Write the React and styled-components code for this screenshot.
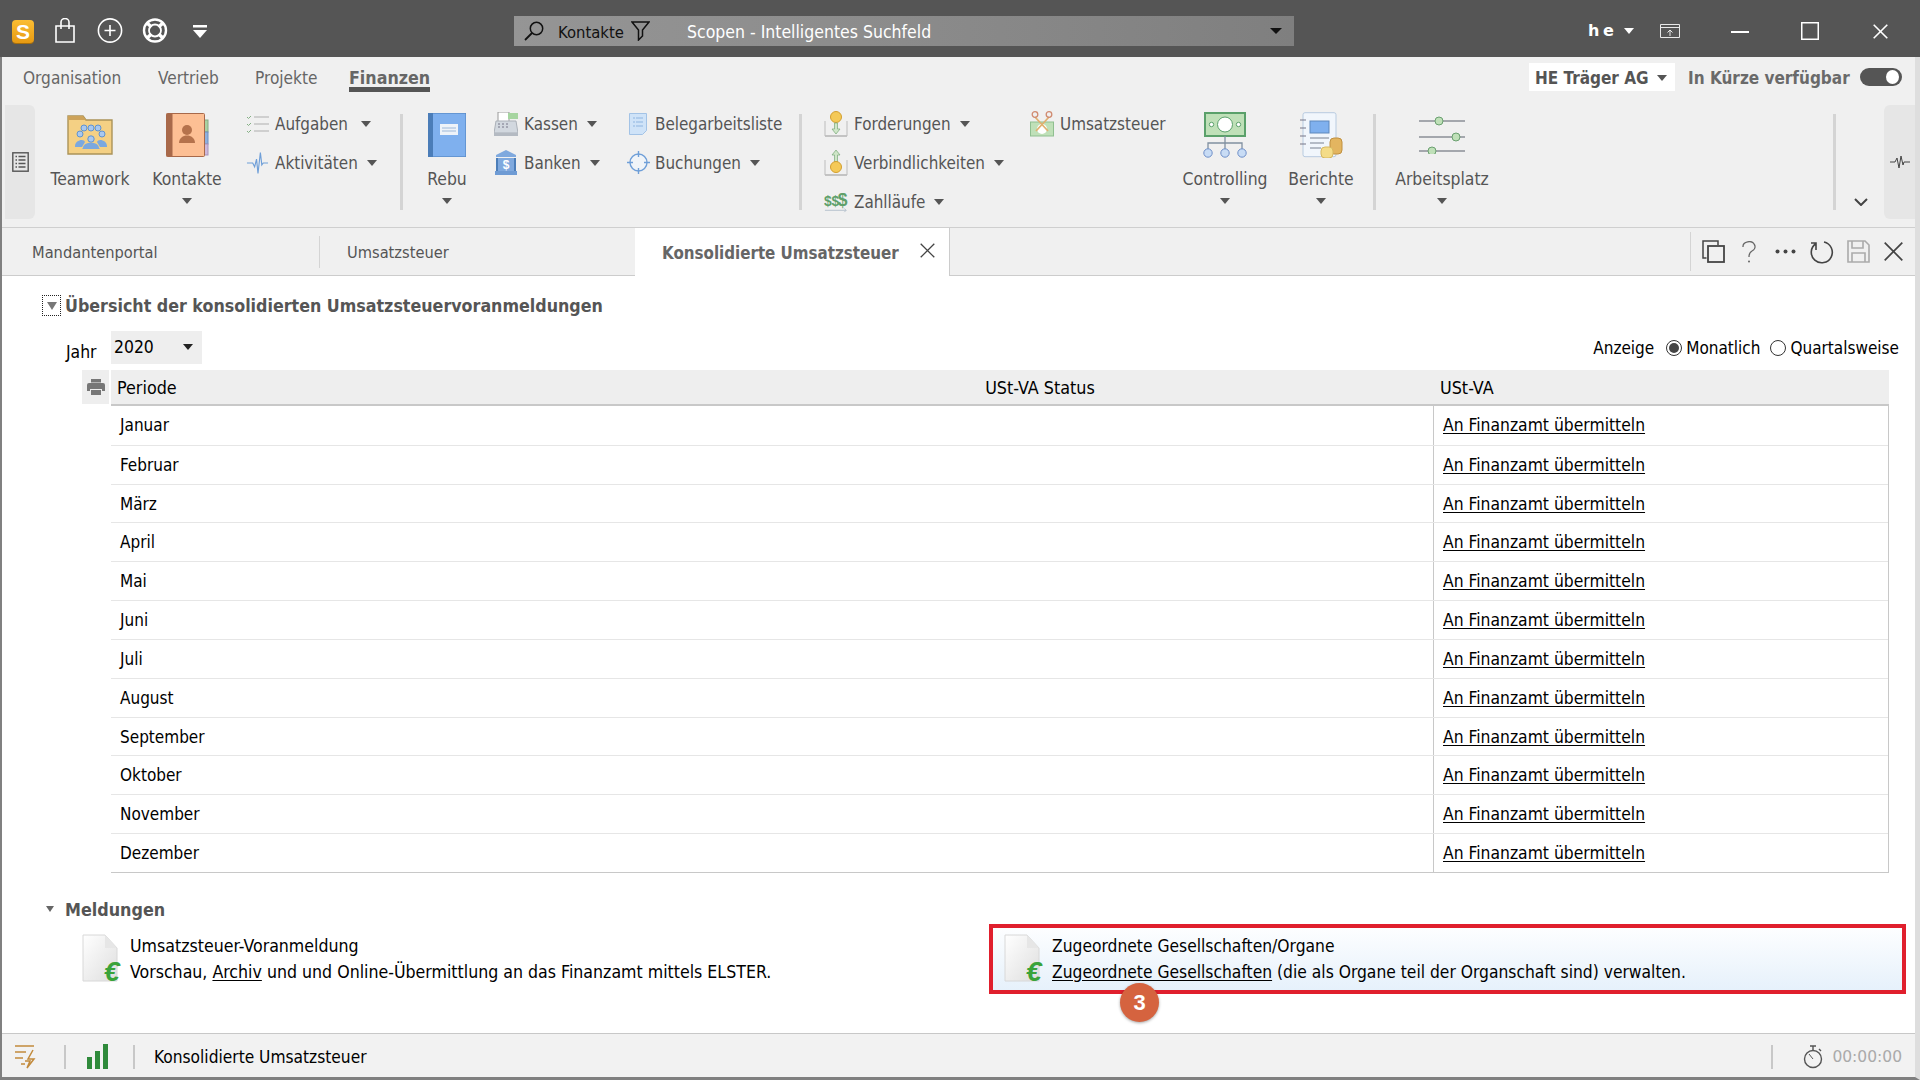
import React from 'react';
import styled, { createGlobalStyle } from 'styled-components';

const Global = createGlobalStyle`
  html, body { margin: 0; padding: 0; background: #fff; }
  body { font-family: "DejaVu Sans Condensed", "DejaVu Sans", sans-serif; font-stretch: condensed; font-size: 17px; color: #000; overflow: hidden; }
  * { box-sizing: border-box; }
`;

const Frame = styled.div`
  width: 1920px; height: 1080px; display: flex; flex-direction: column; background: #fff;
`;
const TitleBar = styled.header`
  height: 57px; flex: none; background: #555; display: flex; align-items: flex-start; position: relative;
`;
const Logo = styled.div`
  width: 22px; height: 23px; margin: 20px 0 0 12px; border-radius: 4px; background: linear-gradient(#fbbd33, #e79a12);
  color: #fff; font: bold 21px/23px "Liberation Sans", sans-serif; text-align: center; box-shadow: 0 1px 0 #a86f0c;
`;
const TitleIcon = styled.div`
  margin: ${p => p.$top}px 0 0 ${p => p.$ml}px; width: ${p => p.$w}px; height: ${p => p.$h}px; display: flex;
`;
const SearchBox = styled.div`
  margin: 16px 0 0 307px; width: 780px; height: 30px; background: linear-gradient(90deg, #959595 0, #8b8b8b 50%, #7f7f7f 100%);
  display: flex; align-items: center; position: relative;
`;
const SearchScope = styled.span`
  margin: 2px 0 0 14px; color: #111; font-size: 16.5px; width: 73px; white-space: nowrap;
`;
const SearchHint = styled.span`
  margin: 2px 0 0 37px; color: #fff; font-size: 17.5px; white-space: nowrap;
`;
const SearchCaret = styled.span`
  position: absolute; right: 12px; top: 12px; width: 0; height: 0; border: 6px solid transparent; border-top: 6px solid #111; border-bottom: 0;
`;
const UserName = styled.span`
  margin: 21px 0 0 294px; width: 36px; color: #fff; font: bold 16px/20px "DejaVu Sans", sans-serif; letter-spacing: 3.5px; white-space: nowrap;
`;
const Caret = styled.span`
  display: inline-block; width: 0; height: 0; flex: none; border-left: ${p => p.$s || 5}px solid transparent; border-right: ${p => p.$s || 5}px solid transparent;
  border-top: ${p => (p.$s || 5) + 1}px solid ${p => p.$c || '#555'};
`;
const UserCaret = styled(Caret)`margin: 28px 0 0 0;`;

const Body = styled.div`
  flex: 1; display: flex; flex-direction: column; min-height: 0; border-left: 2px solid #808080; border-right: 5px solid #dedede; border-bottom: 3px solid #808080;
`;
const Ribbon = styled.section`
  height: 171px; flex: none; background: #f0f0f0; display: flex; flex-direction: column; border-bottom: 1px solid #cfcfcf;
`;
const RibbonTabs = styled.nav`
  height: 43px; flex: none; display: flex; align-items: flex-start; padding-left: 21px; position: relative;
`;
const RibbonTab = styled.a`
  height: 35px; padding-top: 11px; line-height: 20px; font-size: ${p => p.$on ? 17.7 : 17.1}px; color: #666; font-weight: ${p => p.$on ? 700 : 400};
  border-bottom: ${p => p.$on ? '5px solid #555' : '0'}; white-space: nowrap; width: ${p => p.$w ? `${p.$w}px` : 'auto'};
`;
const Company = styled.div`
  position: absolute; left: 1527px; top: 6px; width: 146px; height: 28px; background: #fff; display: flex; align-items: center; justify-content: space-between;
  padding: 1px 8px 0 6px; font: bold 17px/20px "DejaVu Sans Condensed", sans-serif; color: #555; white-space: nowrap;
`;
const Soon = styled.div`
  position: absolute; left: 1686px; top: 10px; font-weight: 700; font-size: 17px; line-height: 22px; color: #6a6a6a; white-space: nowrap;
`;
const Toggle = styled.div`
  position: absolute; left: 1858px; top: 11px; width: 42px; height: 18px; border-radius: 9px; background: #555;
  &::after { content: ''; position: absolute; right: 3px; top: 2px; width: 13px; height: 14px; border-radius: 50%; background: #fff; }
`;
const RibbonBody = styled.div`
  flex: 1; display: flex; align-items: flex-start;
`;
const SidePill = styled.div`
  width: ${p => p.$w}px; margin: 5px 0 0 ${p => p.$ml}px; height: 114px; background: #e6e6e6; display: flex; align-items: center; justify-content: center;
  border-radius: ${p => p.$right ? '6px 0 0 6px' : '0 6px 6px 0'};
`;
const Big = styled.div`
  width: ${p => p.$w}px; margin-left: ${p => p.$ml}px; padding-top: 12px; display: flex; flex-direction: column; align-items: center; flex: none;
`;
const BigIcon = styled.div`height: 46px; display: flex; align-items: center; justify-content: center;`;
const BigLabel = styled.div`
  margin-top: 11px; height: 20px; line-height: 20px; font-size: 17.4px; color: #555; white-space: nowrap;
`;
const BigCaret = styled(Caret)`margin-top: 9px;`;
const SmallCol = styled.div`
  width: ${p => p.$w}px; margin-left: ${p => p.$ml}px; padding-top: 4px; display: flex; flex-direction: column; flex: none;
`;
const SmallRow = styled.div`
  height: 39px; display: flex; align-items: center; font-size: 16.9px; color: #555; white-space: nowrap; position: relative;
`;
const SmallIcon = styled.div`
  width: ${p => p.$w || 24}px; margin-right: ${p => p.$gap || 6}px; display: flex; justify-content: center; align-items: center; flex: none;
`;
const SmallCaret = styled(Caret)`margin-left: ${p => p.$ml || 9}px;`;
const RibbonSep = styled.div`
  width: 3px; height: 96px; margin: 14px 0 0 ${p => p.$ml}px; background: #d4d4d4; flex: none;
`;
const Chevron = styled.div`
  width: 14px; margin: 98px 0 0 ${p => p.$ml}px; flex: none; display: flex;
`;

const TabStrip = styled.div`
  height: 48px; flex: none; background: #f0f0f0; display: flex; align-items: stretch; border-bottom: 1px solid #ccc; position: relative;
`;
const DocTab = styled.div`
  width: ${p => p.$w}px; padding: 2px 0 0 ${p => p.$pl}px; display: flex; align-items: center; color: #555; font-size: 16.3px; white-space: nowrap; position: relative;
  &::after { content: ''; display: ${p => p.$line ? 'block' : 'none'}; position: absolute; right: 0; top: 8px; bottom: 7px; width: 1px; background: #d4d4d4; }
`;
const ActiveTab = styled.div`
  width: 315px; height: 48px; padding: 2px 0 0 27px; background: #fff; margin-left: -1px; display: flex; align-items: center; color: #666; font-weight: 700; font-size: 16.8px; white-space: nowrap; position: relative;
  border-right: 1px solid #ccc;
`;
const TabClose = styled.div`margin: -5px 0 0 21px; display: flex;`;
const TabTools = styled.div`
  margin-left: auto; width: 225px; border-left: 1px solid #d4d4d4; margin-top: 8px; display: flex; align-items: center; padding-left: 11px; position: relative; top: -4px;
`;
const ToolIcon = styled.div`
  margin-left: ${p => p.$ml || 0}px; display: flex;
`;

const Content = styled.main`
  flex: 1; min-height: 0; display: flex; flex-direction: column; background: #fff; padding-top: 19px; position: relative;
`;
const SectionHead = styled.div`
  display: flex; align-items: center; height: 21px; margin-left: 40px; gap: 4px; font-weight: 700; font-size: 17.7px; color: #555; white-space: nowrap;
`;
const HeadText = styled.span`margin-top: 1px;`;
const ExpandBox = styled.div`
  width: 19px; height: 21px; border: 1px dotted #222; display: flex; align-items: center; justify-content: center;
`;
const FilterRow = styled.div`
  height: 33px; margin-top: 15px; display: flex; align-items: flex-start; padding-left: 64px;
`;
const JahrLabel = styled.span`width: 45px; margin-top: 11px; line-height: 20px; font-size: 17.4px;`;
const YearSelect = styled.div`
  width: 91px; height: 33px; background: #eee; display: flex; align-items: center; justify-content: space-between; padding: 0 9px 1px 3px; font-size: 17.4px;
`;
const Anzeige = styled.div`
  margin-left: auto; margin-right: 16px; height: 33px; display: flex; align-items: center; font-size: 17px; white-space: nowrap;
`;
const Radio = styled.span`
  width: 16px; height: 16px; border-radius: 50%; border: 1px solid #333; margin: 0 4px 0 ${p => p.$ml}px; display: flex; align-items: center; justify-content: center; background: #fff;
  &::after { content: ''; width: 10px; height: 10px; border-radius: 50%; background: ${p => p.$on ? '#444' : 'transparent'}; }
`;
const TableWrap = styled.div`
  margin: 6px 0 0 80px; display: flex; align-items: flex-start; gap: 2px;
`;
const PrintCell = styled.div`
  width: 27px; height: 34px; background: #eee; display: flex; align-items: center; justify-content: center;
`;
const Grid = styled.div`width: 1778px;`;
const HeadRow = styled.div`
  height: 36px; display: grid; grid-template-columns: 536px 786px 1fr; background: #eee; border-bottom: 2px solid #c8c8c8; align-items: center; font-size: 17.8px; padding-top: 1px;
`;
const HeadCell = styled.div`
  padding-left: ${p => p.$pl || 0}px; text-align: ${p => p.$center ? 'center' : 'left'};
`;
const Rows = styled.div`
  height: 467px; display: grid; grid-auto-rows: 1fr; border-right: 1px solid #c8c8c8; border-bottom: 1px solid #c8c8c8;
`;
const Row = styled.div`
  display: grid; grid-template-columns: 1322px 1fr; border-top: ${p => p.$first ? 0 : '1px solid #e6e6e6'}; font-size: 17.35px; align-items: stretch;
`;
const PeriodCell = styled.div`display: flex; align-items: center; padding-left: 9px; font-size: 17px;`;
const LinkCell = styled.div`display: flex; align-items: center; padding-left: 9px; border-left: 1px solid #c8c8c8;`;
const Link = styled.a`
  color: #000; text-decoration: underline; text-underline-offset: 2px; white-space: nowrap;
`;
const MeldHead = styled.div`
  margin: 25px 0 0 44px; height: 22px; display: flex; align-items: center; gap: 11px; font-weight: 700; font-size: 17.8px; color: #555;
`;
const Cards = styled.div`
  margin-top: 4px; display: flex; align-items: flex-start;
`;
const Card = styled.div`
  width: ${p => p.$w}px; height: 70px; margin-left: ${p => p.$ml}px; padding: ${p => p.$hi ? '8px 0 0 11px' : '12px 0 0 0'}; display: flex; position: relative;
  font-size: ${p => p.$hi ? 17.3 : 17.6}px;
  ${p => p.$hi && 'border: 4px solid #e01f2d; background: linear-gradient(#fdfeff, #e6f1fb);'}
`;
const CardIcon = styled.div`width: 48px; height: 50px; flex: none; display: flex; margin-top: -2px;`;
const CardText = styled.div`display: flex; flex-direction: column; gap: 6px; white-space: nowrap; line-height: 20px;`;
const Badge = styled.div`
  position: absolute; left: 127px; bottom: -32px; width: 39px; height: 39px; border-radius: 50%; background: #d5633f; color: #fff;
  font: bold 22px/39px "Liberation Sans", sans-serif; text-align: center; box-shadow: 0 1px 3px rgba(0,0,0,.35);
`;
const StatusBar = styled.footer`
  height: 44px; flex: none; background: #f2f2f2; border-top: 1px solid #c8c8c8; padding-top: 2px; display: flex; align-items: center; position: relative; font-size: 17.2px;
`;
const StatusSep = styled.div`
  width: 2px; height: 24px; background: #c8c8c8; margin-left: ${p => p.$ml}px; flex: none;
`;
const StatusIcon = styled.div`margin-left: ${p => p.$ml}px; display: flex; flex: none;`;
const StatusText = styled.span`margin-left: 19px; white-space: nowrap; flex: 1;`;
const Timer = styled.span`margin: 0 13px 0 9px; color: #aaa; font: 15.5px "DejaVu Sans", sans-serif; white-space: nowrap;`;

/* Icons */
const Svg = ({ w, h, children, vb }) => <svg width={w} height={h} viewBox={vb || `0 0 ${w} ${h}`} fill="none">{children}</svg>;

const Bag = () => <Svg w={22} h={25}><path d="M2 8h18v16H2zM7 11V4a4 3.5 0 0 1 8 0v7" stroke="#fff" strokeWidth="1.6"/></Svg>;
const PlusCircle = () => <Svg w={26} h={25}><circle cx="13" cy="12.5" r="11.6" stroke="#fff" strokeWidth="1.6"/><path d="M13 7v11M7.5 12.5h11" stroke="#fff" strokeWidth="1.6"/></Svg>;
const Buoy = () => <Svg w={26} h={25}><circle cx="13" cy="12.5" r="11" stroke="#fff" strokeWidth="2.4"/><circle cx="13" cy="12.5" r="6" stroke="#fff" strokeWidth="1.8"/><path d="M5 5l4.5 4M21 5l-4.5 4M5 20l4.5-4M21 20l-4.5-4" stroke="#fff" strokeWidth="3.4"/></Svg>;
const QuickDrop = () => <Svg w={14} h={13}><path d="M0 0h14v2.5H0zM0 5h14l-7 8z" fill="#fff"/></Svg>;
const Magnifier = () => <Svg w={20} h={20}><circle cx="12.5" cy="7.5" r="6.2" stroke="#111" strokeWidth="1.5"/><path d="M8 12l-7 7" stroke="#111" strokeWidth="1.8"/></Svg>;
const FilterIcon = () => <Svg w={19} h={20}><path d="M1 1h17l-6.5 8v6l-4 4V9z" stroke="#111" strokeWidth="1.5"/></Svg>;
const ScreenIcon = () => <Svg w={20} h={14}><path d="M.5.5h19v13H.5zM.5 3.5h19" stroke="#e8e8e8"/><path d="M10 12V6M7.5 8.5L10 6l2.5 2.5" stroke="#e8e8e8"/></Svg>;
const MinIcon = () => <Svg w={18} h={3}><rect width="18" height="2" fill="#fff"/></Svg>;
const MaxIcon = () => <Svg w={18} h={18}><rect x=".75" y=".75" width="16.5" height="16.5" stroke="#fff" strokeWidth="1.5"/></Svg>;
const XIcon = ({ s = 15, c = '#fff', sw = 1.6 }) => <Svg w={s} h={s}><path d={`M.7.7L${s - .7} ${s - .7}M${s - .7} .7L.7 ${s - .7}`} stroke={c} strokeWidth={sw}/></Svg>;

const ListDoc = () => <Svg w={17} h={20}><rect x=".8" y=".8" width="15.4" height="18.4" stroke="#555" strokeWidth="1.4"/><path d="M3.5 4.5h1.5M6.5 4.5h7M3.5 8h1.5M6.5 8h7M3.5 11.5h1.5M6.5 11.5h7M3.5 15h1.5M6.5 15h7" stroke="#555" strokeWidth="1.4"/></Svg>;
const PulseSmall = () => <Svg w={20} h={14}><path d="M0 7h5l2-4 2 10 2-12 2 9 1-3h6" stroke="#444" strokeWidth="1"/></Svg>;
const ChevronDown = () => <Svg w={14} h={8}><path d="M1 1l6 6 6-6" stroke="#444" strokeWidth="2"/></Svg>;

const FolderIcon = () => <Svg w={46} h={40}><path d="M1 3.5V39h44V5H19l-3-4H1z" fill="#f4d084" stroke="#ab9358" strokeWidth="1.4"/><path d="M1 1h15l3 4H1z" fill="#cda35a"/>
  {[[17, 13], [24, 13], [31, 13]].map(([x, y]) => <circle key={x} cx={x} cy={y} r="3" fill="#a9c8ee" stroke="#5f93d0"/>)}
  {[[13, 19], [35, 19]].map(([x, y]) => <circle key={x} cx={x} cy={y} r="3" fill="#a9c8ee" stroke="#5f93d0"/>)}
  <circle cx="24" cy="24" r="3.2" fill="#a9c8ee" stroke="#5f93d0"/>
  <path d="M16 33c0-7 16-7 16 0l1 1H15zM8 31c0-6 9-8 10-4l-3 5H8zM40 31c0-6-9-8-10-4l3 5h7z" fill="#7ba8df"/></Svg>;
const AddressBook = () => <Svg w={43} h={44}><rect x="37" y="7" width="5" height="12" fill="#a9d2a2" stroke="#86aa84"/><rect x="37" y="19" width="5" height="12" fill="#8fb1de" stroke="#6f8fc0"/><rect x="37" y="31" width="5" height="11" fill="#ccb8dc" stroke="#a893b8"/><rect x=".5" y=".5" width="38" height="43" rx="1" fill="#fdbf94" stroke="#a8694a"/><rect x=".5" y=".5" width="6" height="43" fill="#a8694a"/><circle cx="21" cy="17" r="5" fill="#b5724c"/><path d="M13 30c0-10 16-10 16 0z" fill="#b5724c"/></Svg>;
const CheckList = () => <Svg w={23} h={18}><path d="M8 2h15M8 9h15M8 16h15" stroke="#c4c4c4" strokeWidth="1.5"/><path d="M1 2l1.5 1.5L5 1M1 9l1.5 1.5L5 8M1 16l1.5 1.5L5 15" stroke="#84b084" strokeWidth="1"/></Svg>;
const Pulse = () => <Svg w={24} h={26}><path d="M1 13h6l2 4 2-8 1.5 15L15 2l1.5 13 1.5-2h5" stroke="#6f9fd8" strokeWidth="1.2"/></Svg>;
const BlueBook = () => <Svg w={38} h={44}><rect width="38" height="44" fill="#7fb0ee" stroke="#4b7db8" rx="1"/><rect width="5" height="44" fill="#4b7db8"/><rect x="12" y="11" width="18" height="11" fill="#eef3f9"/><path d="M14 15h14M14 18h14" stroke="#9db8d8"/></Svg>;
const Register = () => <Svg w={24} h={24}><rect x="4" y="0" width="11" height="10" fill="#fff" stroke="#999"/><rect x="14" y="1" width="10" height="6" fill="#a6d5a0"/><path d="M2 9h20l2 12H0z" fill="#d2d8df" stroke="#aab0b8"/><path d="M4 12h2M8 12h2M12 12h2M4 15h2M8 15h2M12 15h2" stroke="#778"/><rect y="21" width="24" height="3" fill="#b4bac2"/></Svg>;
const Bank = () => <Svg w={22} h={25}><path d="M11 0L1 5v2h20V5z" fill="#7fa9de"/><rect x="3" y="8" width="16" height="13" fill="#7fa9de"/><rect x="1" y="8" width="2" height="13" fill="#4b7db8"/><rect x="19" y="8" width="2" height="13" fill="#4b7db8"/><rect y="21" width="22" height="4" fill="#6e9bd4"/><text x="11" y="19" textAnchor="middle" fontFamily="Liberation Sans" fontWeight="700" fontSize="12" fill="#fff">$</text></Svg>;
const LightDoc = () => <Svg w={18} h={22}><path d="M.5.5h17v17l-4 4H.5z" fill="#cfe3f8" stroke="#a3c3e6"/><path d="M4 5h2M7 5h7M4 9h2M7 9h7M4 13h2M7 13h7" stroke="#8fb5e0"/></Svg>;
const Target = () => <Svg w={23} h={23}><circle cx="11.5" cy="11.5" r="8.5" fill="#f0f4f8" stroke="#6f9fd8" strokeWidth="1.4"/><path d="M11.5 0v6M11.5 17v6M0 11.5h6M17 11.5h6" stroke="#6f9fd8" strokeWidth="1.4"/></Svg>;
const CoinTray = ({ up }) => <Svg w={24} h={26}><path d="M1 10v15h22V10" stroke="#bcbcbc" strokeWidth="1"/><path d="M1 25h22" stroke="#bcbcbc" strokeWidth="1.5"/>{up ? <><path d="M12 0l-4 5h2.5v7h3V5H16z" fill="#cfe6c8" stroke="#77a877" strokeWidth=".7"/><circle cx="12" cy="17" r="5.5" fill="#f4c957" stroke="#d39f2f"/></> : <><circle cx="12" cy="6" r="5.5" fill="#f4c957" stroke="#d39f2f"/><path d="M12 23l4-5h-2.5v-6h-3v6H8z" fill="#cfe6c8" stroke="#77a877" strokeWidth=".7"/></>}</Svg>;
const Dollars = () => <Svg w={26} h={26}><text x="0" y="17" fontFamily="Liberation Sans" fontWeight="700" fontSize="15" fill="#5fa06a">$</text><text x="8" y="17" fontFamily="Liberation Sans" fontWeight="700" fontSize="15" fill="#5fa06a">$</text><text x="15" y="17" fontFamily="Liberation Sans" fontWeight="700" fontSize="19" fill="#5fa06a">$</text><path d="M1 22h23l-2-2M24 22l-2 2" stroke="#b4c0cc"/></Svg>;
const Scissors = () => <Svg w={24} h={26}><rect x=".5" y="11" width="23" height="14" fill="#bfe0b8" stroke="#8fbf90"/><circle cx="12" cy="18" r="5" fill="#fff"/><path d="M5 6l13 14M19 6L6 20" stroke="#e0b070" strokeWidth="1.8"/><circle cx="5" cy="3.5" r="2.8" stroke="#d08a70" strokeWidth="1.3"/><circle cx="19" cy="3.5" r="2.8" stroke="#d08a70" strokeWidth="1.3"/></Svg>;
const ControllingIcon = () => <Svg w={44} h={46}><rect x="2" y="1" width="40" height="23" fill="#bfe0b8" stroke="#5aa06a" strokeWidth="2"/><circle cx="22" cy="12.5" r="7.5" fill="#fff" stroke="#5aa06a"/><circle cx="8.5" cy="12.5" r="2.2" fill="#fff" stroke="#5aa06a"/><circle cx="35.5" cy="12.5" r="2.2" fill="#fff" stroke="#5aa06a"/><path d="M22 24v13M5 37v-6h34v6" stroke="#8090a0" strokeWidth="1.3"/><circle cx="5" cy="41" r="4.2" fill="#c8dcf5" stroke="#6f8fc8"/><circle cx="22" cy="41" r="4.2" fill="#c8dcf5" stroke="#6f8fc8"/><circle cx="39" cy="41" r="4.2" fill="#c8dcf5" stroke="#6f8fc8"/></Svg>;
const ReportIcon = () => <Svg w={43} h={46}><rect x="3" y=".7" width="33" height="44" rx="2" fill="#f1f6fc" stroke="#b8cbe0"/><path d="M0 8h6M0 16h6M0 24h6M0 32h6" stroke="#778" strokeWidth="1.2"/><rect x="10" y="9" width="19" height="12" fill="#7fb0ee" stroke="#5f88bc"/><path d="M10 26h19M10 31h14M10 36h11" stroke="#a0a8b4" strokeWidth="1.3"/><rect x="30" y="26" width="12" height="16" rx="4" fill="#e3b560" stroke="#c09040"/><rect x="21" y="35" width="12" height="11" rx="4" fill="#f4dc88" stroke="#d6b860"/></Svg>;
const Sliders = () => <Svg w={46} h={38}><path d="M0 5h46M0 21h46M0 35h46" stroke="#8a8f96" strokeWidth="1.5"/><circle cx="20" cy="5" r="4" fill="#bfe0b8" stroke="#6aa070"/><circle cx="37" cy="21" r="4" fill="#bfe0b8" stroke="#6aa070"/><circle cx="13" cy="35" r="4" fill="#bfe0b8" stroke="#6aa070"/></Svg>;
const CopyIcon = () => <Svg w={23} h={23}><path d="M4.5 18H1V1h15v4" stroke="#444" strokeWidth="1.5"/><rect x="6" y="6" width="16" height="16" stroke="#444" strokeWidth="1.8"/></Svg>;
const QIcon = () => <Svg w={14} h={22}><path d="M1 6a6 5 0 1 1 9 4c-2 1-3 3-3 6" stroke="#666" strokeWidth="1.3"/><circle cx="7" cy="20.5" r="1" fill="#666"/></Svg>;
const Dots = () => <Svg w={21} h={5}><circle cx="2.5" cy="2.5" r="2" fill="#444"/><circle cx="10.5" cy="2.5" r="2" fill="#444"/><circle cx="18.5" cy="2.5" r="2" fill="#444"/></Svg>;
const Refresh = () => <Svg w={24} h={24}><path d="M6 3.5a10.5 10.5 0 1 0 8-1.5M6 10V3H1" stroke="#444" strokeWidth="1.6"/></Svg>;
const SaveIcon = () => <Svg w={23} h={23}><path d="M1 1h17l4 4v17H1zM5 1v7h11V1M5 22v-9h13v9" stroke="#aaa" strokeWidth="1.6"/></Svg>;
const Printer = () => <Svg w={18} h={18}><rect x="4" y="1" width="10" height="3.5" fill="#777"/><path d="M2 5h14a2 2 0 0 1 2 2v6h-3v-2H3v2H0V7a2 2 0 0 1 2-2z" fill="#777"/><rect x="4" y="12" width="10" height="5" fill="#777"/></Svg>;
const TriDown = ({ s = 10, c = '#777' }) => <Svg w={s} h={s - 2}><path d={`M0 0h${s}L${s / 2} ${s - 2}z`} fill={c}/></Svg>;
const DocEuro = ({ id }) => <Svg w={44} h={54}><defs><linearGradient id={id} x1="0" y1="0" x2="1" y2="1"><stop offset="0" stopColor="#fff"/><stop offset="1" stopColor="#dedede"/></linearGradient></defs><path d="M1 1h22l12 13v33H1z" fill={`url(#${id})`} stroke="#d8d8d8"/><path d="M23 1v13h12z" fill="#e6e6e6"/><text x="22" y="47" fontFamily="Liberation Sans" fontStyle="italic" fontWeight="700" fontSize="28" fill="#3aa33a">€</text></Svg>;
const Bolt = () => <Svg w={25} h={24}><path d="M0 1h19M0 7h11M0 13h8M6 19h4" stroke="#c28a3c" strokeWidth="1.5"/><path d="M18 5l-5 9h6l-7 9 3-7h-5" stroke="#c28a3c" strokeWidth="1.5"/></Svg>;
const Bars = () => <Svg w={22} h={25}><rect x="0" y="13" width="5" height="12" fill="#2f8a3b"/><rect x="8" y="7" width="5" height="18" fill="#2f8a3b"/><rect x="16" y="0" width="5" height="25" fill="#2f8a3b"/></Svg>;
const Watch = () => <Svg w={20} h={24}><path d="M7 1h6M10 1v4M16 4l2 2" stroke="#555" strokeWidth="1.4"/><circle cx="10" cy="14" r="8.5" stroke="#555" strokeWidth="1.4"/><path d="M10 14L6 9" stroke="#555"/></Svg>;

const months = ['Januar', 'Februar', 'März', 'April', 'Mai', 'Juni', 'Juli', 'August', 'September', 'Oktober', 'November', 'Dezember'];

export default function App() {
  return (
    <Frame>
      <Global />
      <TitleBar>
        <Logo>S</Logo>
        <TitleIcon $top={18} $ml={20} $w={22} $h={25}><Bag /></TitleIcon>
        <TitleIcon $top={18} $ml={21} $w={26} $h={25}><PlusCircle /></TitleIcon>
        <TitleIcon $top={18} $ml={19} $w={26} $h={25}><Buoy /></TitleIcon>
        <TitleIcon $top={25} $ml={25} $w={14} $h={13}><QuickDrop /></TitleIcon>
        <SearchBox>
          <TitleIcon $top={0} $ml={10} $w={20} $h={20}><Magnifier /></TitleIcon>
          <SearchScope>Kontakte</SearchScope>
          <FilterIcon />
          <SearchHint>Scopen - Intelligentes Suchfeld</SearchHint>
          <SearchCaret />
        </SearchBox>
        <UserName>he</UserName>
        <UserCaret $c="#fff" />
        <TitleIcon $top={24} $ml={26} $w={20} $h={14}><ScreenIcon /></TitleIcon>
        <TitleIcon $top={31} $ml={51} $w={18} $h={3}><MinIcon /></TitleIcon>
        <TitleIcon $top={22} $ml={52} $w={18} $h={18}><MaxIcon /></TitleIcon>
        <TitleIcon $top={24} $ml={54} $w={15} $h={15}><XIcon /></TitleIcon>
      </TitleBar>
      <Body>
        <Ribbon>
          <RibbonTabs>
            <RibbonTab $w={135}>Organisation</RibbonTab>
            <RibbonTab $w={97}>Vertrieb</RibbonTab>
            <RibbonTab $w={94}>Projekte</RibbonTab>
            <RibbonTab $on>Finanzen</RibbonTab>
            <Company>HE Träger AG <Caret $c="#555" /></Company>
            <Soon>In Kürze verfügbar</Soon>
            <Toggle />
          </RibbonTabs>
          <RibbonBody>
            <SidePill $w={30} $ml={3}><ListDoc /></SidePill>
            <Big $w={90} $ml={10}><BigIcon><FolderIcon /></BigIcon><BigLabel>Teamwork</BigLabel></Big>
            <Big $w={84} $ml={10}><BigIcon><AddressBook /></BigIcon><BigLabel>Kontakte</BigLabel><BigCaret /></Big>
            <SmallCol $w={146} $ml={17}>
              <SmallRow><SmallIcon $w={23}><CheckList /></SmallIcon>Aufgaben<SmallCaret $ml={13} /></SmallRow>
              <SmallRow><SmallIcon $w={23}><Pulse /></SmallIcon>Aktivitäten<SmallCaret /></SmallRow>
            </SmallCol>
            <RibbonSep $ml={8} />
            <Big $w={54} $ml={17}><BigIcon><BlueBook /></BigIcon><BigLabel>Rebu</BigLabel><BigCaret /></Big>
            <SmallCol $w={132} $ml={20}>
              <SmallRow><SmallIcon><Register /></SmallIcon>Kassen<SmallCaret /></SmallRow>
              <SmallRow><SmallIcon><Bank /></SmallIcon>Banken<SmallCaret /></SmallRow>
            </SmallCol>
            <SmallCol $w={170} $ml={0}>
              <SmallRow><SmallIcon $w={24} $gap={5}><LightDoc /></SmallIcon>Belegarbeitsliste</SmallRow>
              <SmallRow><SmallIcon $w={24} $gap={5}><Target /></SmallIcon>Buchungen<SmallCaret /></SmallRow>
            </SmallCol>
            <RibbonSep $ml={3} />
            <SmallCol $w={206} $ml={22}>
              <SmallRow><SmallIcon><CoinTray /></SmallIcon>Forderungen<SmallCaret /></SmallRow>
              <SmallRow><SmallIcon><CoinTray up /></SmallIcon>Verbindlichkeiten<SmallCaret /></SmallRow>
              <SmallRow><SmallIcon><Dollars /></SmallIcon>Zahlläufe<SmallCaret /></SmallRow>
            </SmallCol>
            <SmallCol $w={140} $ml={0}>
              <SmallRow><SmallIcon><Scissors /></SmallIcon>Umsatzsteuer</SmallRow>
            </SmallCol>
            <Big $w={100} $ml={5}><BigIcon><ControllingIcon /></BigIcon><BigLabel>Controlling</BigLabel><BigCaret /></Big>
            <Big $w={72} $ml={10}><BigIcon><ReportIcon /></BigIcon><BigLabel>Berichte</BigLabel><BigCaret /></Big>
            <RibbonSep $ml={16} />
            <Big $w={100} $ml={16}><BigIcon><Sliders /></BigIcon><BigLabel>Arbeitsplatz</BigLabel><BigCaret /></Big>
            <RibbonSep $ml={341} />
            <Chevron $ml={18}><ChevronDown /></Chevron>
            <SidePill $right $w={31} $ml={16}><PulseSmall /></SidePill>
          </RibbonBody>
        </Ribbon>
        <TabStrip>
          <DocTab $w={318} $pl={30} $line>Mandantenportal</DocTab>
          <DocTab $w={316} $pl={27}>Umsatzsteuer</DocTab>
          <ActiveTab>Konsolidierte Umsatzsteuer<TabClose><XIcon s={15} c="#444" sw={1.3} /></TabClose></ActiveTab>
          <TabTools>
            <ToolIcon><CopyIcon /></ToolIcon>
            <ToolIcon $ml={17}><QIcon /></ToolIcon>
            <ToolIcon $ml={19}><Dots /></ToolIcon>
            <ToolIcon $ml={14}><Refresh /></ToolIcon>
            <ToolIcon $ml={13}><SaveIcon /></ToolIcon>
            <ToolIcon $ml={14}><XIcon s={19} c="#444" sw={1.7} /></ToolIcon>
          </TabTools>
        </TabStrip>
        <Content>
          <SectionHead><ExpandBox><TriDown /></ExpandBox><HeadText>Übersicht der konsolidierten Umsatzsteuervoranmeldungen</HeadText></SectionHead>
          <FilterRow>
            <JahrLabel>Jahr</JahrLabel>
            <YearSelect>2020<Caret $c="#222" /></YearSelect>
            <Anzeige>Anzeige<Radio $ml={12} $on />Monatlich<Radio $ml={10} />Quartalsweise</Anzeige>
          </FilterRow>
          <TableWrap>
            <PrintCell><Printer /></PrintCell>
            <Grid>
              <HeadRow>
                <HeadCell $pl={6}>Periode</HeadCell>
                <HeadCell $center>USt-VA Status</HeadCell>
                <HeadCell $pl={7}>USt-VA</HeadCell>
              </HeadRow>
              <Rows>
                {months.map((m, i) => (
                  <Row key={m} $first={i === 0}>
                    <PeriodCell>{m}</PeriodCell>
                    <LinkCell><Link>An Finanzamt übermitteln</Link></LinkCell>
                  </Row>
                ))}
              </Rows>
            </Grid>
          </TableWrap>
          <MeldHead><TriDown s={8} c="#666" />Meldungen</MeldHead>
          <Cards>
            <Card $w={907} $ml={80}>
              <CardIcon><DocEuro id="pg1" /></CardIcon>
              <CardText>
                <span>Umsatzsteuer-Voranmeldung</span>
                <span>Vorschau, <Link>Archiv</Link> und und Online-Übermittlung an das Finanzamt mittels ELSTER.</span>
              </CardText>
            </Card>
            <Card $w={917} $ml={0} $hi>
              <CardIcon><DocEuro id="pg2" /></CardIcon>
              <CardText>
                <span>Zugeordnete Gesellschaften/Organe</span>
                <span><Link>Zugeordnete Gesellschaften</Link> (die als Organe teil der Organschaft sind) verwalten.</span>
              </CardText>
              <Badge>3</Badge>
            </Card>
          </Cards>
        </Content>
        <StatusBar>
          <StatusIcon $ml={13}><Bolt /></StatusIcon>
          <StatusSep $ml={24} />
          <StatusIcon $ml={21}><Bars /></StatusIcon>
          <StatusSep $ml={24} />
          <StatusText>Konsolidierte Umsatzsteuer</StatusText>
          <StatusSep $ml={0} />
          <StatusIcon $ml={30}><Watch /></StatusIcon>
          <Timer>00:00:00</Timer>
        </StatusBar>
      </Body>
    </Frame>
  );
}
